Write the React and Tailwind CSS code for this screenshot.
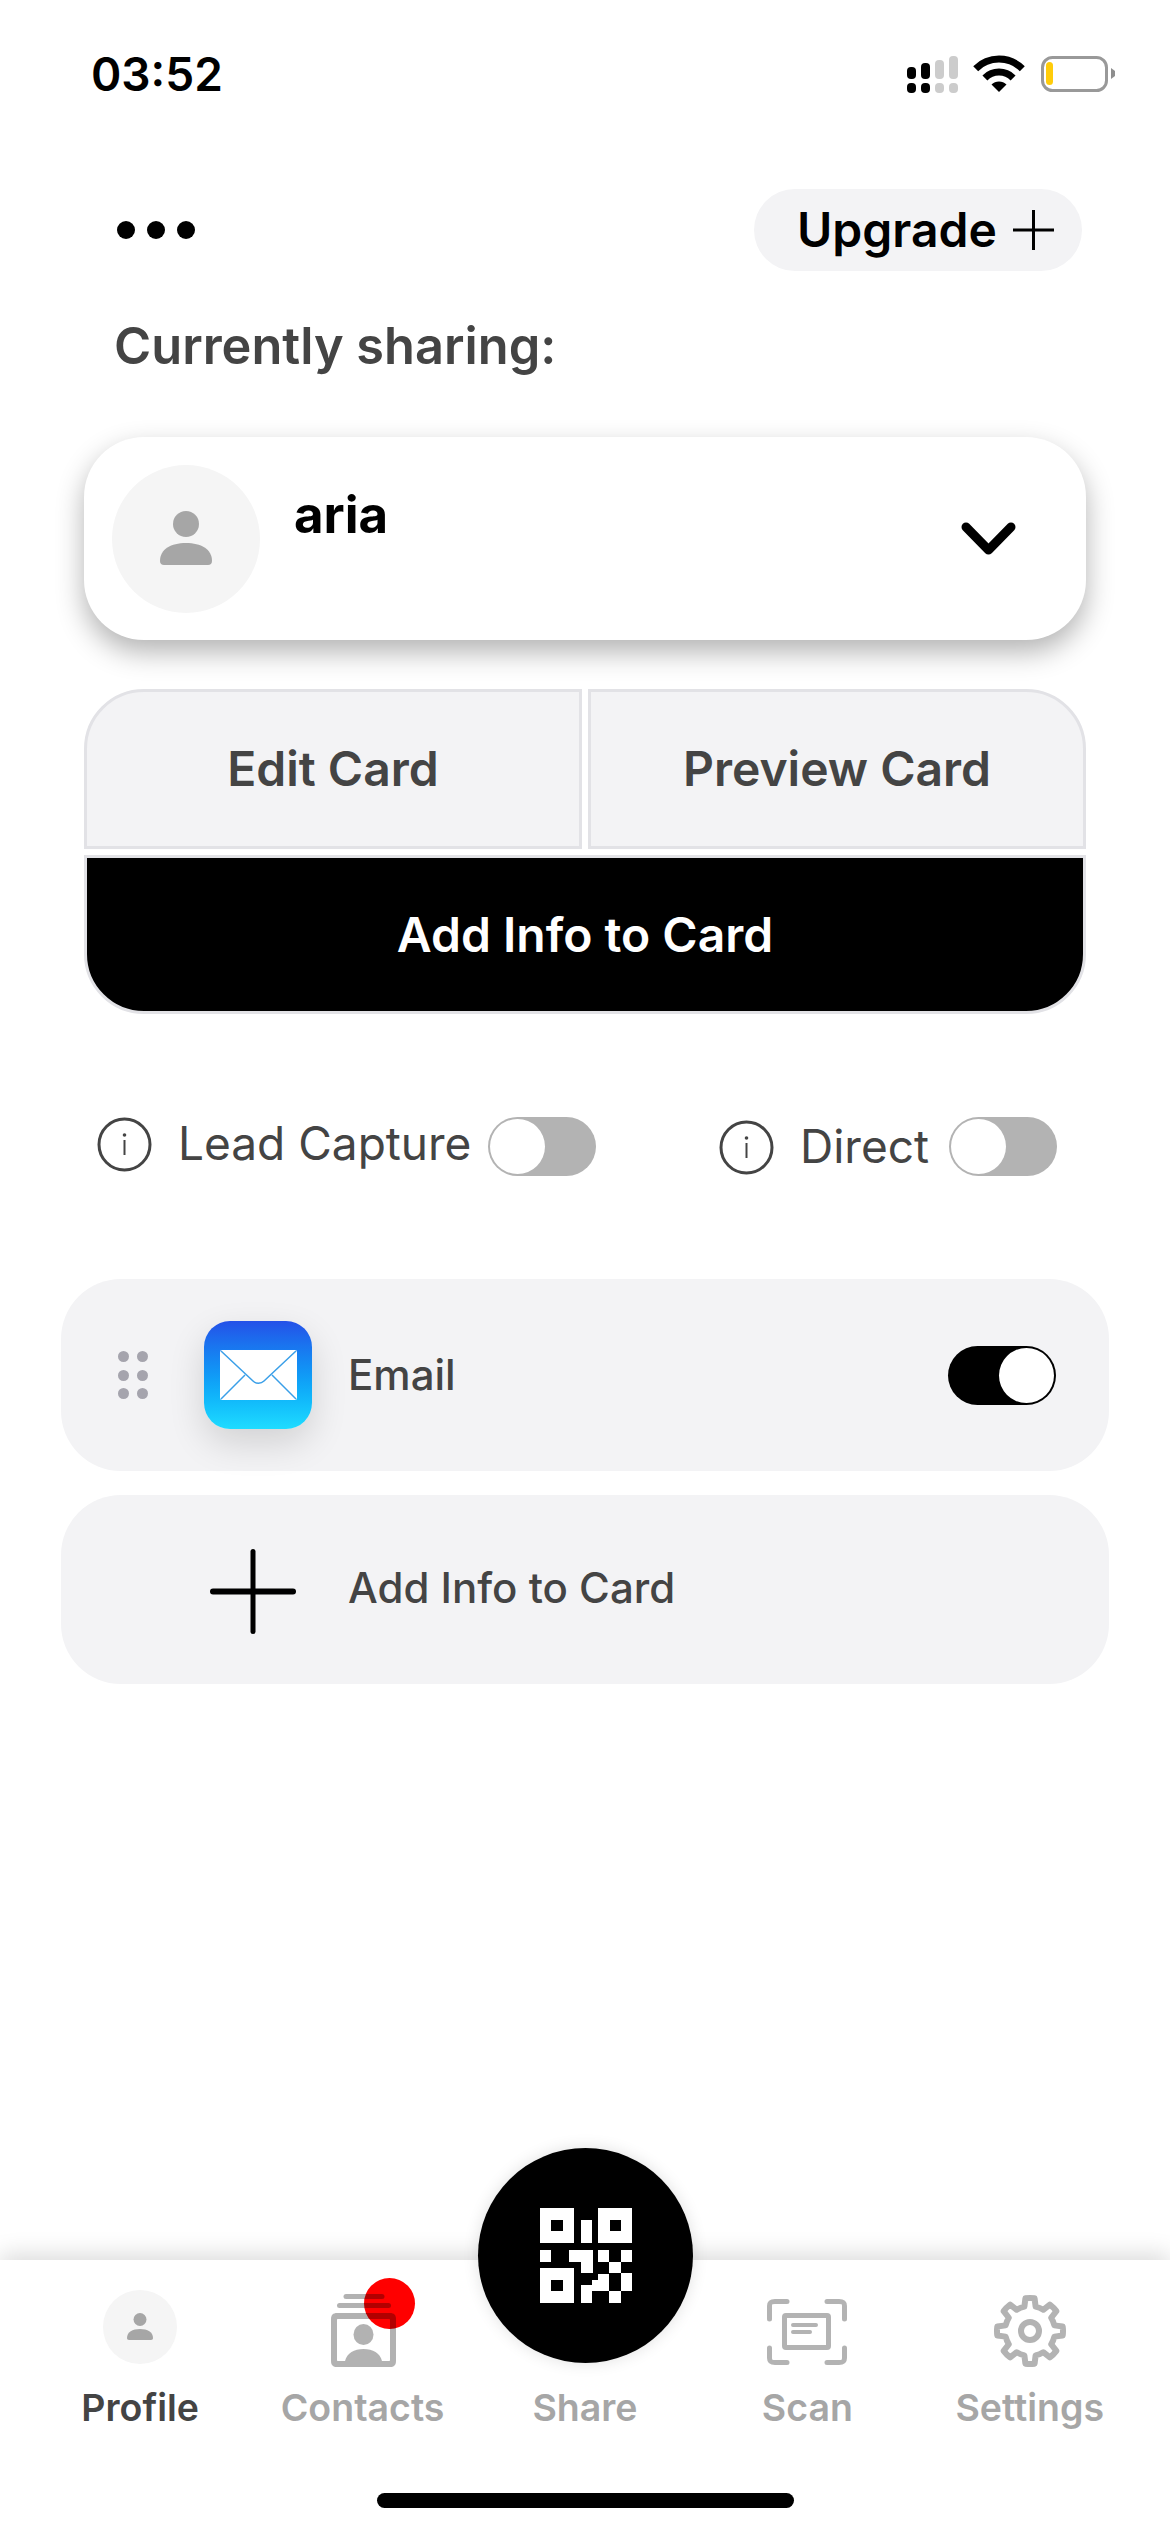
import React from "react";

const gearPath = (() => {
  const cx = 40, cy = 41, ro = 33, ri = 25;
  const pt = (r, deg) => {
    const a = ((deg - 90) * Math.PI) / 180;
    return `${(cx + r * Math.cos(a)).toFixed(2)} ${(cy + r * Math.sin(a)).toFixed(2)}`;
  };
  let d = "";
  for (let k = 0; k < 8; k++) {
    const a = k * 45;
    d += `${k === 0 ? "M" : `A${ri} ${ri} 0 0 1`} ${pt(ri, a - 13)} L${pt(ro, a - 8)} A${ro} ${ro} 0 0 1 ${pt(ro, a + 8)} L${pt(ri, a + 13)} `;
  }
  return d + `A${ri} ${ri} 0 0 1 ${pt(ri, -13)} Z`;
})();

function StatusIcons() {
  return (
    <svg width="212" height="38" viewBox="0 0 212 38" className="block">
      <g fill="#000">
        <rect x="0" y="12" width="9" height="12" rx="4" />
        <rect x="14" y="8" width="9" height="16" rx="4" />
        <rect x="0" y="28" width="9" height="10" rx="4" />
        <rect x="14" y="28" width="9" height="10" rx="4" />
      </g>
      <g fill="#cccccc">
        <rect x="28" y="5" width="9" height="19" rx="4" />
        <rect x="42" y="1" width="9" height="23" rx="4" />
        <rect x="28" y="28" width="9" height="10" rx="4" />
        <rect x="42" y="28" width="9" height="10" rx="4" />
      </g>
      <path d="M68.7 13.7A33 33 0 0 1 115.3 13.7" fill="none" stroke="#000" strokeWidth="7" />
      <path d="M77.9 22.9A20 20 0 0 1 106.1 22.9" fill="none" stroke="#000" strokeWidth="7" />
      <path d="M92 37L84.5 29.5A10.6 10.6 0 0 1 99.5 29.5Z" fill="#000" />
      <rect x="135.5" y="2.5" width="64" height="33" rx="10" fill="none" stroke="#999999" strokeWidth="3" />
      <rect x="139" y="7" width="7" height="23" rx="3.5" fill="#ffcc0a" />
      <path d="M204 13L208 16V21L204 24Z" fill="#8e8e8e" />
    </svg>
  );
}

function PlusThin() {
  return (
    <svg width="41" height="40" viewBox="0 0 41 40" className="block">
      <path d="M0 20H41M20.5 0V40" stroke="#000" strokeWidth="3" />
    </svg>
  );
}

function Person({ size, fill = "#a6a6a6" }) {
  return (
    <svg width={size} height={size * 1.04} viewBox="0 0 52 54" className="block">
      <ellipse cx="26" cy="13" rx="13" ry="13" fill={fill} />
      <path d="M0 50C0 38 11 32 26 32C41 32 52 38 52 50C52 52.5 50.5 54 48 54H4C1.500 54 0 52.500 0 50Z" fill={fill} />
    </svg>
  );
}

function Info() {
  return (
    <svg width="55" height="55" viewBox="0 0 55 55" className="block">
      <circle cx="27.5" cy="27.500" r="25.500" fill="none" stroke="#444444" strokeWidth="3" />
      <circle cx="27.500" cy="18" r="1.800" fill="#444444" />
      <path d="M27.500 23V38" stroke="#444444" strokeWidth="2" />
    </svg>
  );
}

function Toggle({ on }) {
  return (
    <div className={`flex h-[59px] w-[108px] shrink-0 rounded-full p-[2px] ${on ? "justify-end bg-black" : "justify-start bg-[#b3b3b3]"}`}>
      <div className="h-[55px] w-[55px] rounded-full bg-white" />
    </div>
  );
}

function Envelope() {
  return (
    <svg width="77" height="50" viewBox="0 0 77 50" className="block">
      <rect width="77" height="50" rx="2" fill="#fff" />
      <path
        d="M1 1L33 31C36 34 41 34 44 31L76 1M25 25L1 49M52 25L76 49"
        fill="none"
        stroke="#3a9fe8"
        strokeWidth="1.500"
      />
    </svg>
  );
}

function Qr() {
  const white = [
    [117, 115, 102, 104], [239, 150, 34, 69], [291, 115, 102, 104],
    [117, 241, 34, 36], [117, 295, 102, 105],
    [205, 241, 70, 36], [239, 277, 36, 34],
    [291, 241, 34, 36], [361, 241, 32, 36], [325, 277, 36, 34],
    [361, 311, 32, 54], [325, 365, 36, 35],
    [239, 347, 34, 53], [273, 330, 52, 35], [291, 313, 34, 30],
  ];
  const black = [[151, 150, 34, 34], [326, 150, 34, 34], [151, 330, 34, 35]];
  return (
    <svg width="92" height="95" viewBox="117 115 276 285" className="block" shapeRendering="crispEdges">
      {white.map(([x, y, w, h], i) => <rect key={i} x={x} y={y} width={w} height={h} fill="#fff" />)}
      {black.map(([x, y, w, h], i) => <rect key={i} x={x} y={y} width={w} height={h} fill="#000" />)}
    </svg>
  );
}

function ContactsIcon() {
  return (
    <svg width="120" height="80" viewBox="0 0 120 80" className="block overflow-visible">
      <ellipse cx="86.500" cy="13.500" rx="25.500" ry="25.500" fill="#ff0000" />
      <g fill="#000" fillOpacity="0.3">
        <rect x="40.500" y="4" width="41" height="5" rx="2.500" />
        <rect x="34" y="13" width="54" height="5" rx="2.500" />
        <path
          fillRule="evenodd"
          d="M34 23H87C91 23 93 25 93 29V71C93 75 91 77 87 77H34C30 77 28 75 28 71V29C28 25 30 23 34 23ZM35 29C34.400 29 34 29.400 34 30V70C34 70.600 34.400 71 35 71H86C86.600 71 87 70.600 87 70V30C87 29.400 86.600 29 86 29Z"
        />
        <ellipse cx="60.500" cy="44.500" rx="10" ry="10.500" />
        <path d="M42 71C44 63 51 59 60.500 59C70 59 77 63 79 71Z" />
      </g>
    </svg>
  );
}

function ScanIcon() {
  return (
    <svg width="80" height="80" viewBox="0 0 80 80" className="block" fill="none" stroke="#b3b3b3" strokeWidth="5" strokeLinecap="round">
      <path d="M2.500 29V16C2.500 12 5 11.500 8 11.500H20" />
      <path d="M60 11.500H72C75 11.500 77.500 12 77.500 16V29" />
      <path d="M2.500 58V68C2.500 72 5 72.500 8 72.500H20" />
      <path d="M60 72.500H72C75 72.500 77.500 72 77.500 68V58" />
      <rect x="17.500" y="25.500" width="44" height="32" rx="1.500" strokeLinejoin="round" />
      <path d="M26 35H49M26 42H43" strokeWidth="4" />
    </svg>
  );
}

function GearIcon() {
  return (
    <svg width="80" height="80" viewBox="0 0 80 80" className="block overflow-visible" fill="none" stroke="#b3b3b3" strokeWidth="6" strokeLinejoin="round">
      <path d={gearPath} />
      <circle cx="40" cy="41" r="9" />
    </svg>
  );
}

function NavItem({ label, active, children }) {
  return (
    <div className="flex flex-col items-center">
      <div className="flex h-[80px] items-start justify-center">{children}</div>
      <span className={`text-[37.5px] leading-[76px] font-semibold whitespace-nowrap ${active ? "text-[#444444]" : "text-[#a6a6a6]"}`}>{label}</span>
    </div>
  );
}

export default function App() {
  return (
    <div className="relative flex h-[2532px] w-[1170px] flex-col overflow-hidden bg-white [font-family:Inter,sans-serif]">
      <div className="flex items-start justify-between pt-[54px] pl-[91px] pr-[51px]">
        <span className="text-[46px] leading-[40px] font-semibold text-black">03:52</span>
        <div className="pt-[1px]"><StatusIcons /></div>
      </div>

      <div className="mt-[95px] flex items-center justify-between pl-[117px] pr-[88px]">
        <div className="flex gap-[12px]">
          <div className="h-[18px] w-[18px] rounded-full bg-black" />
          <div className="h-[18px] w-[18px] rounded-full bg-black" />
          <div className="h-[18px] w-[18px] rounded-full bg-black" />
        </div>
        <div className="flex h-[82px] w-[328px] items-center gap-[16px] rounded-full bg-[#f3f3f5] pl-[43px]">
          <span className="text-[48px] font-semibold text-black">Upgrade</span>
          <PlusThin />
        </div>
      </div>

      <div className="mt-[45px] pl-[114px] text-[50.5px] leading-[60px] font-semibold text-[#444444]">Currently sharing:</div>

      <div className="mx-[84px] mt-[61px] flex h-[203px] items-center rounded-[60px] bg-white pr-[70px] pl-[28px] shadow-[0_12px_28px_rgba(0,0,0,0.3)]">
        <div className="flex h-[148px] w-[148px] shrink-0 items-center justify-center rounded-full bg-[#f5f5f5]">
          <Person size={52} />
        </div>
        <span className="ml-[34px] self-start pt-[48px] text-[51px] leading-[60px] font-bold text-black">aria</span>
        <svg width="55" height="33" viewBox="0 0 55 33" className="ml-auto block">
          <path d="M5 5L27.500 28L50 5" fill="none" stroke="#000" strokeWidth="9" strokeLinecap="round" strokeLinejoin="round" />
        </svg>
      </div>

      <div className="mx-[84px] mt-[49px] flex flex-col gap-[6px]">
        <div className="flex gap-[6px]">
          <div className="flex h-[160px] flex-1 items-center justify-center rounded-tl-[60px] border-[3px] border-[#e2e2e6] bg-[#f3f3f5] text-[48px] font-semibold text-[#444444]">Edit Card</div>
          <div className="flex h-[160px] flex-1 items-center justify-center rounded-tr-[60px] border-[3px] border-[#e2e2e6] bg-[#f3f3f5] text-[48px] font-semibold text-[#444444]">Preview Card</div>
        </div>
        <div className="flex h-[159px] items-center justify-center rounded-b-[60px] border-[3px] border-[#e2e2e6] bg-black text-[48px] font-semibold text-white">Add Info to Card</div>
      </div>

      <div className="mt-[103px] flex h-[59px] items-start pl-[97px]">
        <Info />
        <span className="ml-[26px] w-[291px] text-[46px] leading-[53px] whitespace-nowrap text-[#444444]">Lead Capture</span>
        <div className="ml-[19px]"><Toggle /></div>
        <div className="ml-[123px] pt-[3px]"><Info /></div>
        <span className="ml-[26px] w-[130px] text-[46px] leading-[59px] whitespace-nowrap text-[#444444]">Direct</span>
        <div className="ml-[19px]"><Toggle /></div>
      </div>

      <div className="mx-[61px] mt-[103px] flex h-[192px] items-center rounded-[60px] bg-[#f3f3f5] pr-[53px] pl-[57px]">
        <div className="grid grid-cols-2 gap-x-[8px] gap-y-[7.500px]">
          {[0, 1, 2, 3, 4, 5].map((i) => <div key={i} className="h-[11px] w-[11px] rounded-full bg-[#a5a4ad]" />)}
        </div>
        <div className="ml-[56px] flex h-[108px] w-[108px] shrink-0 items-center justify-center rounded-[26px] bg-linear-to-b from-[#2450e8] to-[#1fdcff] shadow-[0_14px_36px_rgba(0,0,0,0.14)]">
          <Envelope />
        </div>
        <span className="ml-[36px] -translate-y-[1.500px] text-[42px] font-medium text-[#444444]">Email</span>
        <div className="ml-auto"><Toggle on /></div>
      </div>

      <div className="mx-[61px] mt-[24px] flex h-[189px] items-center rounded-[60px] bg-[#f3f3f5] pl-[149px]">
        <svg width="86" height="86" viewBox="0 0 86 86" className="block translate-y-[1.500px]">
          <path d="M3 43H83" stroke="#000" strokeWidth="6" strokeLinecap="round" />
          <path d="M43 3V83" stroke="#000" strokeWidth="5" strokeLinecap="round" />
        </svg>
        <span className="ml-[52px] -translate-y-[2px] text-[42px] font-medium text-[#444444]">Add Info to Card</span>
      </div>

      <div className="relative mt-auto h-[272px] bg-white pt-[30px] shadow-[0_-6px_22px_rgba(0,0,0,0.14)]">
        <div className="grid grid-cols-5 px-[29px]">
          <NavItem label="Profile" active>
            <div className="flex h-[74px] w-[74px] items-center justify-center rounded-full bg-[#f5f5f5]">
              <Person size={26} />
            </div>
          </NavItem>
          <NavItem label="Contacts"><ContactsIcon /></NavItem>
          <NavItem label="Share"><div className="h-[80px] w-[80px]" /></NavItem>
          <NavItem label="Scan"><ScanIcon /></NavItem>
          <NavItem label="Settings"><GearIcon /></NavItem>
        </div>
        <div className="absolute -top-[112px] left-[478px] flex h-[215px] w-[215px] items-center justify-center rounded-full bg-black shadow-[0_0_16px_rgba(0,0,0,0.12)]">
          <Qr />
        </div>
        <div className="absolute top-[233px] left-[377px] h-[15px] w-[417px] rounded-full bg-black" />
      </div>
    </div>
  );
}
